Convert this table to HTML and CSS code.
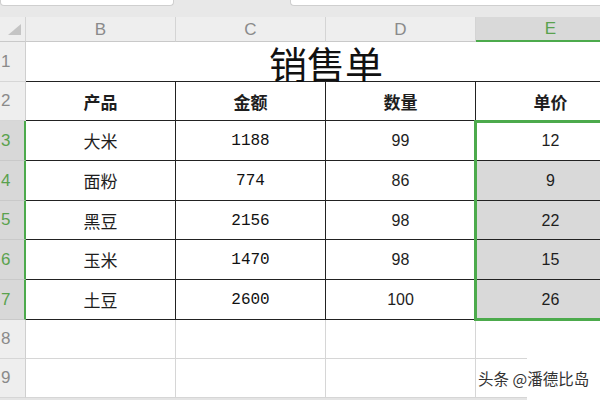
FILE: index.html
```html
<!DOCTYPE html>
<html lang="zh-CN">
<head>
<meta charset="utf-8">
<title>销售单</title>
<link rel="stylesheet" href="styles.css">
</head>
<body>
<div class="page">
  <div class="topbar">
    <div class="namebox"><span class="cut">E3</span></div>
    <div class="fx"><span class="cut">fx</span></div>
    <div class="formula"><span class="cut">12/10</span></div>
  </div>
  <div class="sheet">
    <div class="corner"><svg width="26" height="25" viewBox="0 0 26 25"><polygon points="21,7 21,18 8,18" fill="#c4c4c4"/></svg></div>
    <div class="colh">B</div>
    <div class="colh">C</div>
    <div class="colh">D</div>
    <div class="colh colsel">E</div>

    <div class="rowh">1</div>
    <div class="title">销售单</div>

    <div class="rowh">2</div>
    <div class="cell th">产品</div>
    <div class="cell th">金额</div>
    <div class="cell th">数量</div>
    <div class="cell th">单价</div>

    <div class="rowh rsel">3</div>
    <div class="cell">大米</div>
    <div class="cell mono">1188</div>
    <div class="cell num">99</div>
    <div class="cell num">12</div>

    <div class="rowh rsel">4</div>
    <div class="cell">面粉</div>
    <div class="cell mono">774</div>
    <div class="cell num">86</div>
    <div class="cell num shade">9</div>

    <div class="rowh rsel">5</div>
    <div class="cell">黑豆</div>
    <div class="cell mono">2156</div>
    <div class="cell num">98</div>
    <div class="cell num shade">22</div>

    <div class="rowh rsel">6</div>
    <div class="cell">玉米</div>
    <div class="cell mono">1470</div>
    <div class="cell num">98</div>
    <div class="cell num shade">15</div>

    <div class="rowh rsel">7</div>
    <div class="cell">土豆</div>
    <div class="cell mono">2600</div>
    <div class="cell num">100</div>
    <div class="cell num shade">26</div>

    <div class="rowh">8</div>
    <div class="blank"></div>
    <div class="blank"></div>
    <div class="blank"></div>
    <div class="blank"></div>

    <div class="rowh">9</div>
    <div class="blank"></div>
    <div class="blank"></div>
    <div class="blank"></div>
    <div class="blank"></div>
  </div>
  <div class="selbox"></div>
  <div class="markbg"></div>
  <div class="mark">头条 @潘德比岛</div>
</div>
</body>
</html>
```

FILE: styles.css
```css
html, body {
  margin: 0;
  padding: 0;
  width: 600px;
  height: 400px;
  overflow: hidden;
  background: #e4e4e4;
}

.page {
  position: relative;
  width: 600px;
  height: 400px;
  overflow: hidden;
  font-family: "Noto Sans CJK SC", "Noto Sans", sans-serif;
}

.topbar {
  height: 17px;
  background: #e8e8e8;
  display: flex;
  align-items: flex-start;
}

.namebox {
  width: 172px;
  height: 5px;
  background: #fff;
  border: 1px solid #cfcfcf;
  border-top: none;
  border-radius: 0 0 4px 4px;
  position: relative;
  overflow: hidden;
}

.fx {
  width: 116px;
  height: 6px;
  position: relative;
  overflow: hidden;
}

.formula {
  flex: 1;
  height: 5px;
  background: #fff;
  border: 1px solid #cfcfcf;
  border-top: none;
  border-right: none;
  border-radius: 0 0 0 4px;
  position: relative;
  overflow: hidden;
}

.cut {
  position: absolute;
  top: -13px;
  font-family: "Liberation Sans", sans-serif;
  font-size: 15px;
  line-height: 15px;
  color: #555;
}

.namebox .cut { left: 68px; }
.fx .cut { left: 66px; font-style: italic; color: #444; }
.formula .cut { left: 25px; }

.sheet {
  display: grid;
  grid-template-columns: 26px 150px 150px 150px 150px;
  grid-template-rows: 25px 40px 39px 40px 40px 39px 40px 40px 39px 39px;
  width: 626px;
  background: #fff;
}

.corner {
  background: #eeeeee;
  border-bottom: 1px solid #c9c9c9;
  border-right: 1px solid #d4d4d4;
  box-sizing: border-box;
}

.corner svg { display: block; }

.colh {
  background: #eeeeee;
  border-bottom: 1px solid #c9c9c9;
  border-right: 1px solid #d4d4d4;
  box-sizing: border-box;
  display: flex;
  align-items: center;
  justify-content: center;
  font-family: "Liberation Sans", sans-serif;
  font-size: 17px;
  color: #8a8a8a;
  padding-top: 1px;
}

.colh.colsel {
  background: #d9d9d9;
  color: #5aa24e;
  border-bottom: 2px solid #4caa4c;
}

.rowh {
  background: #eeeeee;
  border-bottom: 1px solid #d6d6d6;
  border-right: 1px solid #cfcfcf;
  box-sizing: border-box;
  display: flex;
  align-items: center;
  padding-left: 1px;
  font-family: "Liberation Sans", sans-serif;
  font-size: 17px;
  color: #8a8a8a;
}

.rowh.rsel {
  background: #d8d8d8;
  color: #5aa24e;
  border-right: 2px solid #4caa4c;
  border-bottom-color: #c9c9c9;
}

.title {
  grid-column: span 4;
  border-bottom: 1px solid #222;
  box-sizing: border-box;
  display: flex;
  align-items: center;
  justify-content: center;
  font-size: 38px;
  font-weight: 400;
  line-height: 1;
  color: #111;
  padding-top: 3px;
}

.cell {
  border-right: 1px solid #222;
  border-bottom: 1px solid #222;
  box-sizing: border-box;
  display: flex;
  align-items: center;
  justify-content: center;
  font-size: 17px;
  color: #1e1e1e;
  background: #fff;
}

.cell.th {
  font-weight: 700;
}

.cell.mono {
  font-family: "Liberation Mono", monospace;
  font-size: 16px;
  color: #111;
  padding-top: 1px;
}

.cell.num {
  font-family: "Liberation Sans", sans-serif;
  font-size: 16px;
  padding-top: 1px;
}

.cell.shade {
  background: #d9d9d9;
}

.blank {
  border-right: 1px solid #d6d6d6;
  border-bottom: 1px solid #d6d6d6;
  box-sizing: border-box;
  background: #fff;
}

.selbox {
  position: absolute;
  left: 474px;
  top: 120px;
  width: 140px;
  height: 195px;
  border: 3px solid #4caa4c;
}

.markbg {
  position: absolute;
  left: 527px;
  top: 322px;
  width: 73px;
  height: 78px;
  background: #fff;
}

.mark {
  position: absolute;
  left: 478px;
  top: 368px;
  font-size: 15.5px;
  line-height: 20px;
  color: #333;
  white-space: nowrap;
  text-shadow: 0 0 2px #fff, 0 0 2px #fff;
}
```
